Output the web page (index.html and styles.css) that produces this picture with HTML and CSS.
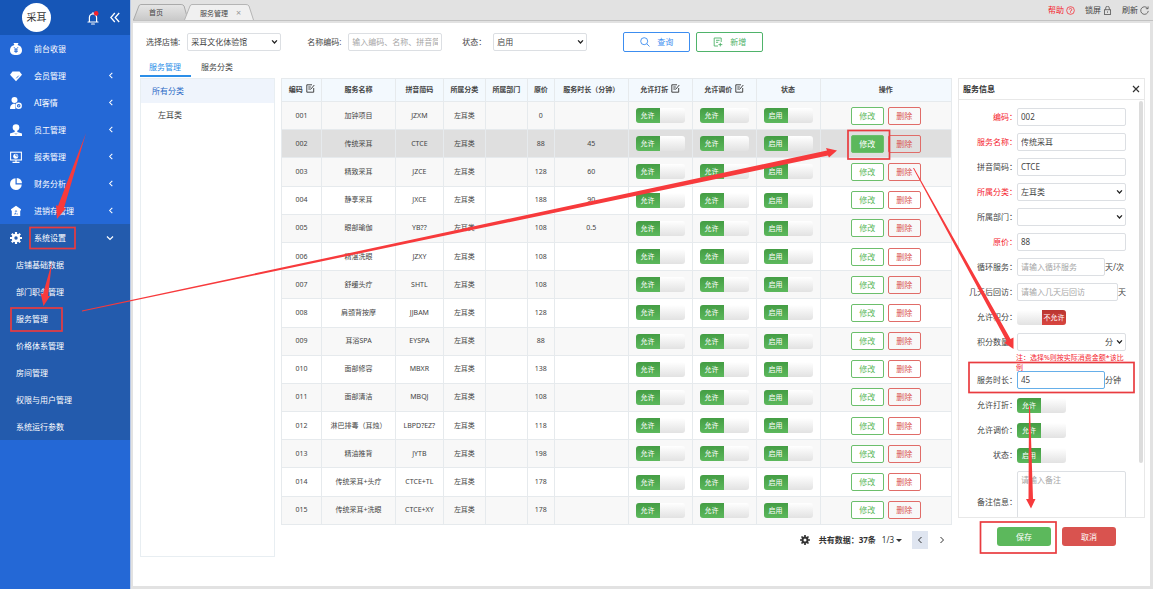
FILE: index.html
```html
<!DOCTYPE html>
<html lang="zh-CN">

<head>
    <meta charset="utf-8" />
    <title>服务管理</title>
    <link rel="stylesheet" href="styles.css">
</head>

<body>
    <aside class="sidebar">
        <div class="brand">
            <span class="logo">采耳</span>
            <svg class="bell" viewBox="0 0 12 14">
                <path d="M1 11h10M2.4 10.5V6.5a3.6 3.6 0 0 1 7.2 0v4M6 1.5v1.2M4.6 13h2.8" fill="none" stroke="#fff" stroke-width="1.2" stroke-linecap="round" />
                <circle cx="9.2" cy="2.4" r="2.3" fill="#f5222d" />
            </svg>
            <svg class="collapse" viewBox="0 0 10 10">
                <path d="M4.8 .5.8 5l4 4.500M9.200 .5l-4 4.500 4 4.500" fill="none" stroke="#fff" stroke-width="1.300" />
            </svg>
        </div>
        <nav>
            <a class="menu" href="#">
                <svg class="icon" viewBox="0 0 12 12"><path fill="#fff" d="M3.500 0h5L7.600 2C10.500 2.500 12 4.700 12 7.200 12 10.500 9.500 12 6 12S0 10.500 0 7.200C0 4.700 1.500 2.500 4.400 2z" /><path d="M4 4.200l2 2.300 2-2.300M6 6.500V10M4.200 6.900h3.600M4.200 8.400h3.600" fill="none" stroke="#2468d6" stroke-width=".9" /></svg>
                <span>前台收银</span>
            </a>
            <a class="menu" href="#">
                <svg class="icon" viewBox="0 0 12 12"><path fill="#fff" d="M2.500 1.500h7L12 4.800 6 11.200 0 4.800z" /><path d="M6.300 8.300 8.700 5.700" stroke="#2468d6" stroke-width=".9" /></svg>
                <span>会员管理</span>
                <svg class="arrow" viewBox="0 0 6 8"><path d="M4.500 1 1.500 4l3 3" /></svg>
            </a>
            <a class="menu" href="#">
                <svg class="icon" viewBox="0 0 12 12"><circle cx="4.500" cy="3" r="3" fill="#fff" /><path fill="#fff" d="M0 12c0-3 1.200-4.500 3.200-5.200h2.200V12z" /><circle cx="8.700" cy="8.700" r="2.500" fill="#2468d6" stroke="#fff" stroke-width="1.400" /><path d="M7.600 8.500h2.200L8.700 9.800z" fill="#fff" /></svg>
                <span>AI客情</span>
                <svg class="arrow" viewBox="0 0 6 8"><path d="M4.500 1 1.500 4l3 3" /></svg>
            </a>
            <a class="menu" href="#">
                <svg class="icon" viewBox="0 0 12 12"><circle cx="6" cy="3.600" r="3.300" fill="#fff" /><path fill="#fff" d="M4.700 6h2.600v2L12 9.600V12H0V9.600L4.700 8z" /><path d="M5 9.300l1 1 1-1" fill="none" stroke="#2468d6" stroke-width=".7" /></svg>
                <span>员工管理</span>
                <svg class="arrow" viewBox="0 0 6 8"><path d="M4.500 1 1.500 4l3 3" /></svg>
            </a>
            <a class="menu" href="#">
                <svg class="icon" viewBox="0 0 12 12"><rect x=".6" y="1.200" width="10.800" height="7.800" fill="none" stroke="#fff" stroke-width="1.100" /><path d="M2.500 11.300h7M6 9v2" stroke="#fff" stroke-width="1.200" /><circle cx="5.700" cy="5.200" r="2.500" fill="#fff" /><path d="M5.900 5V2.700M5.900 5h2.300" stroke="#2468d6" stroke-width=".8" /></svg>
                <span>报表管理</span>
                <svg class="arrow" viewBox="0 0 6 8"><path d="M4.500 1 1.500 4l3 3" /></svg>
            </a>
            <a class="menu" href="#">
                <svg class="icon" viewBox="0 0 12 12"><path fill="#fff" d="M5.500 .2v6.300h6.300A5.900 5.900 0 1 1 5.500 .2zM6.700 0A5.700 5.700 0 0 1 12 5.300H6.700z" /></svg>
                <span>财务分析</span>
                <svg class="arrow" viewBox="0 0 6 8"><path d="M4.500 1 1.500 4l3 3" /></svg>
            </a>
            <a class="menu" href="#">
                <svg class="icon" viewBox="0 0 12 12"><path fill="#fff" d="M6 .8 11 4.200v1.300h-.8V11H1.800V5.500H1V4.200z" /><path d="M4.200 9h1.400V7.600M7.800 9H6.500M5.200 6.800 6 5.500l.8 1.300" fill="none" stroke="#2468d6" stroke-width=".8" /></svg>
                <span>进销存管理</span>
                <svg class="arrow" viewBox="0 0 6 8"><path d="M4.500 1 1.500 4l3 3" /></svg>
            </a>
            <div class="opened">
                <a class="menu" href="#">
                    <svg class="icon" viewBox="0 0 12 12"><circle cx="6" cy="6" r="3" fill="none" stroke="#fff" stroke-width="2.600" /><path d="M6 0v2.500M6 9.500V12M0 6h2.500M9.500 6H12M1.800 1.800l1.700 1.700M8.500 8.500l1.700 1.700M1.800 10.200l1.700-1.700M8.500 3.500l1.700-1.700" stroke="#fff" stroke-width="2.200" /></svg>
                    <span>系统设置</span>
                    <svg class="arrow down" viewBox="0 0 8 6"><path d="M1 1.500l3 3 3-3" /></svg>
                </a>
                <a class="submenu" href="#">店铺基础数据</a>
                <a class="submenu" href="#">部门职务管理</a>
                <a class="submenu" href="#">服务管理</a>
                <a class="submenu" href="#">价格体系管理</a>
                <a class="submenu" href="#">房间管理</a>
                <a class="submenu" href="#">权限与用户管理</a>
                <a class="submenu" href="#">系统运行参数</a>
            </div>
        </nav>
    </aside>

    <div class="main">
        <header class="topbar">
            <div class="page-tabs">
                <button class="page-tab">
                    <svg viewBox="0 0 56 16" preserveAspectRatio="none"><defs><linearGradient id="tabGrey" x2="0" y2="1"><stop offset="0" stop-color="#e6e6e6" /><stop offset="1" stop-color="#c9c9c9" /></linearGradient></defs><path d="M.5 16 6 2Q6.600 .5 8 .5H49Q51 .5 52 2L56 16" fill="url(#tabGrey)" stroke="#a9a9a9" /></svg>
                    <span>首页</span>
                </button>
                <button class="page-tab current">
                    <svg viewBox="0 0 70 16" preserveAspectRatio="none"><path d="M.5 16 6 2Q6.600 .5 8 .5H62Q64 .5 65 2L69.500 16" fill="#f0f0f0" stroke="#b5b5b5" /></svg>
                    <span>服务管理</span><i>×</i>
                </button>
            </div>
            <div class="tools">
                <a class="help" href="#">帮助
                    <svg viewBox="0 0 10 10"><circle cx="5" cy="5" r="4.300" /><path d="M3.600 4a1.400 1.400 0 1 1 1.400 1.500v.8M5 7v.8" /></svg>
                </a>
                <a href="#">锁屏
                    <svg viewBox="0 0 10 10"><rect x="1.500" y="4.200" width="7" height="5.200" /><path d="M3 4V2.300a2 2 0 0 1 4 0V4M5 6v1.500" /></svg>
                </a>
                <a href="#">刷新
                    <svg viewBox="0 0 10 10"><path d="M8.500 2.700A4.200 4.200 0 1 0 9.200 5.500M9 .5v2.500H6.500" /></svg>
                </a>
            </div>
        </header>

        <div class="page">
            <form class="filters">
                <label for="shop">选择店铺:</label>
                <select id="shop"><option>采耳文化体验馆</option></select>
                <label for="keyword">名称编码:</label>
                <input id="keyword" type="text" placeholder="输入编码、名称、拼音简码">
                <label for="state">状态：</label>
                <select id="state"><option>启用</option></select>
                <button type="button" class="search">
                    <svg viewBox="0 0 10 10"><circle cx="4.200" cy="4.200" r="3.500" /><path d="M6.800 6.800 9.500 9.500" /></svg>查询
                </button>
                <button type="button" class="add">
                    <svg viewBox="0 0 10 10"><path d="M5 9H1.200V1h7v4M3 3.300h3.600M3 5.300h2.200M7.300 5.800v3.600M5.500 7.600h3.800" /></svg>新增
                </button>
            </form>

            <div class="content">
                <div class="left">
                    <div class="tabs">
                        <a class="active" href="#">服务管理</a>
                        <a href="#">服务分类</a>
                    </div>
                    <div class="tree">
                        <a class="active" href="#">所有分类</a>
                        <a class="child" href="#">左耳类</a>
                    </div>
                </div>

                <div class="list">
                    <table>
                        <colgroup>
                            <col class="c-code"><col class="c-name"><col class="c-pinyin"><col class="c-type"><col class="c-type"><col class="c-price"><col class="c-name"><col class="c-switch"><col class="c-switch"><col class="c-switch"><col>
                        </colgroup>
                        <thead>
                            <tr>
                                <th>编码 <svg class="edit" viewBox="0 0 9 9"><path d="M6 .8H.8v7.400h6.900V4M2.300 3h2.500M2.300 5h2M4.500 5.500 8.300 1" /></svg></th>
                                <th>服务名称</th>
                                <th>拼音简码</th>
                                <th>所属分类</th>
                                <th>所属部门</th>
                                <th>原价</th>
                                <th>服务时长（分钟）</th>
                                <th>允许打折 <svg class="edit" viewBox="0 0 9 9"><path d="M6 .8H.8v7.400h6.900V4M2.300 3h2.500M2.300 5h2M4.500 5.500 8.300 1" /></svg></th>
                                <th>允许调价 <svg class="edit" viewBox="0 0 9 9"><path d="M6 .8H.8v7.400h6.900V4M2.300 3h2.500M2.300 5h2M4.500 5.500 8.300 1" /></svg></th>
                                <th>状态</th>
                                <th>操作</th>
                            </tr>
                        </thead>
                        <tbody id="rows"></tbody>
                    </table>
                    <div class="pager">
                        <svg class="gear" viewBox="0 0 12 12"><circle cx="6" cy="6" r="3" fill="none" stroke="#333" stroke-width="2.400" /><path d="M6 0v2.500M6 9.500V12M0 6h2.500M9.500 6H12M1.800 1.800l1.700 1.700M8.500 8.500l1.700 1.700M1.800 10.200l1.700-1.700M8.500 3.500l1.700-1.700" stroke="#333" stroke-width="2" /></svg>
                        <b>共有数据：37条</b>
                        <span class="pages">1/3</span><i class="caret"></i>
                        <button class="prev"><svg viewBox="0 0 6 8"><path d="M4.500 1 1.500 4l3 3" /></svg></button>
                        <button><svg viewBox="0 0 6 8"><path d="M1.500 1l3 3-3 3" /></svg></button>
                    </div>
                </div>

                <form class="detail">
                    <div class="box">
                        <div class="box-title">
                            <b>服务信息</b>
                            <svg viewBox="0 0 8 8"><path d="M1 1l6 6M7 1 1 7" /></svg>
                        </div>
                        <div class="fields">
                            <div class="field required"><label for="code">编码：</label><input id="code" type="text" value="002"></div>
                            <div class="field required"><label for="name">服务名称：</label><input id="name" type="text" value="传统采耳"></div>
                            <div class="field"><label for="pinyin">拼音简码：</label><input id="pinyin" type="text" value="CTCE"></div>
                            <div class="field required"><label for="type">所属分类：</label><select id="type"><option>左耳类</option></select></div>
                            <div class="field"><label for="dept">所属部门：</label><select id="dept"><option></option></select></div>
                            <div class="field required"><label for="price">原价：</label><input id="price" type="text" value="88"></div>
                            <div class="field"><label for="cycle">循环服务：</label><input id="cycle" type="text" placeholder="请输入循环服务"><span class="suffix">天/次</span></div>
                            <div class="field"><label for="visit">几天后回访：</label><input id="visit" type="text" placeholder="请输入几天后回访"><span>天</span></div>
                            <div class="field"><label for="points">允许积分：</label><span class="switch off"><input id="points" type="checkbox"><em>不允许</em></span></div>
                            <div class="field with-note"><label for="amount">积分数量：</label><select id="amount" class="unit"><option>分</option></select></div>
                            <p class="note">注：选择%则按实际消费金额*该比例</p>
                            <div class="field"><label for="minutes">服务时长：</label><input id="minutes" class="focused" type="text" value="45"><span class="suffix">分钟</span></div>
                            <div class="field"><label for="discount">允许打折：</label><span class="switch"><input id="discount" type="checkbox" checked><em>允许</em></span></div>
                            <div class="field"><label for="adjust">允许调价：</label><span class="switch"><input id="adjust" type="checkbox" checked><em>允许</em></span></div>
                            <div class="field"><label for="enabled">状态：</label><span class="switch"><input id="enabled" type="checkbox" checked><em>启用</em></span></div>
                            <div class="field"><label for="remark">备注信息：</label><textarea id="remark" placeholder="请输入备注"></textarea></div>
                        </div>
                        <div class="scrollbar"></div>
                    </div>
                    <div class="actions">
                        <button type="button" class="save">保存</button>
                        <button type="button" class="cancel">取消</button>
                    </div>
                </form>
            </div>
        </div>
    </div>

    <!-- step marks over the page -->
    <svg class="marks" viewBox="0 0 1153 589" width="1153" height="589">
        <g fill="none" stroke="#e93b3f" stroke-width="1.700">
            <rect x="30" y="227.500" width="45" height="21" />
            <rect x="11" y="308" width="51" height="23" />
            <rect x="848" y="130.500" width="41.500" height="28.500" />
            <rect x="969" y="362.500" width="165" height="30" />
            <rect x="980.500" y="522" width="75.500" height="31" />
        </g>
        <g fill="#f73a3c">
            <polygon points="86,133 64,208 66,208 57,219 56,205 58,206" />
            <polygon points="52,262 48,296 50,296 43.500,306 40.500,293 43,294" />
            <polygon points="82,310.500 827,150.500 826,148 837,150.500 829,157.500 828,155.500 82,311.500" />
            <polygon points="913,168 914,168 1010.500,339 1013.500,337.500 1013.500,349 1004.500,343 1006.500,341" />
            <polygon points="1029,406 1030,406 1033,499 1035.500,499 1031,508.500 1026,499 1028.500,499" />
        </g>
    </svg>

    <script src="script.js"></script>
</body>

</html>
```
FILE: styles.css
```css
* {
    box-sizing: border-box;
}

body {
    display: flex;
    height: 100vh;
    margin: 0;
    overflow: hidden;
    background-color: #e2e2e2;
    color: #444;
    font-family: "Noto Sans", "Noto Sans CJK SC", sans-serif;
    font-size: 8px;
    line-height: 12px;
}

a {
    color: inherit;
    text-decoration: none;
}

button,
input,
select,
textarea {
    margin: 0;
    padding: 0;
    font: inherit;
    color: inherit;
}

i,
em {
    font-style: normal;
}

svg {
    flex: none;
}

/* sidebar */
.sidebar {
    flex: none;
    width: 131px;
    background-color: #2468d6;
    border-right: 1px solid #b9c9e6;
    color: #fff;
}

.brand {
    display: flex;
    align-items: center;
    height: 35px;
    padding: 0 10px 0 22px;
    background-color: #1656b7;
}

.logo {
    width: 29px;
    height: 29px;
    margin-right: auto;
    border-radius: 50%;
    background-color: #fff;
    color: #333;
    font-size: 10px;
    line-height: 28px;
    text-align: center;
}

.bell {
    width: 12px;
    height: 14px;
    margin-right: 11px;
}

.collapse {
    width: 10px;
    height: 11px;
}

.menu {
    display: flex;
    align-items: center;
    height: 27px;
    padding: 0 16px 0 10px;
}

.menu .icon {
    width: 12px;
    height: 12px;
    margin-right: 12px;
}

.menu .arrow {
    width: 6px;
    height: 7px;
    margin-left: auto;
}

.menu .arrow.down {
    width: 8px;
    height: 6px;
}

.arrow path {
    fill: none;
    stroke: #fff;
    stroke-width: 1.2;
}

.opened {
    background-color: #235bad;
}

.submenu {
    display: block;
    height: 27px;
    padding-left: 16px;
    line-height: 27px;
}

/* top bar */
.main {
    flex: 1;
    min-width: 0;
    display: flex;
    flex-direction: column;
    padding: 0 3px 3px 2px;
}

.topbar {
    display: flex;
    justify-content: space-between;
    align-items: flex-end;
    height: 21px;
    margin-right: -3px;
    border-bottom: 1px solid #c2c2c2;
}

.page-tabs {
    display: flex;
}

.page-tab {
    position: relative;
    width: 55px;
    height: 16px;
    border: 0;
    background: none;
    font-size: 7px;
    line-height: 17px;
    text-align: left;
    padding-left: 16px;
}

.page-tab.current {
    width: 70px;
    margin-left: -4px;
}

.page-tab svg {
    position: absolute;
    left: 0;
    top: 0;
    width: 100%;
    height: 100%;
}

.page-tab span {
    position: relative;
}

.page-tab i {
    position: relative;
    margin-left: 8px;
    color: #999;
    font-size: 9px;
}

.tools {
    display: flex;
    gap: 10px;
    height: 20px;
    padding-right: 4px;
}

.tools a {
    display: flex;
    align-items: center;
    gap: 2px;
}

.tools svg {
    width: 9px;
    height: 9px;
    fill: none;
    stroke: currentColor;
    stroke-width: 0.8;
}

.tools .help {
    color: #f5222d;
}

.page {
    flex: 1;
    min-height: 0;
    display: flex;
    flex-direction: column;
    margin-top: 2px;
    padding: 9px 5px 29px 7px;
    background-color: #fff;
}

/* inputs */
input[type=text],
select,
textarea {
    height: 18px;
    padding: 0 3px 1px;
    border: 1px solid #dcdfe3;
    border-radius: 2px;
    background-color: #fff;
    outline: none;
}

select {
    appearance: none;
    background: #fff url("data:image/svg+xml,%3Csvg xmlns='http://www.w3.org/2000/svg' viewBox='0 0 8 6'%3E%3Cpath d='M1.200 1.200 4 4.200l2.800-3' fill='none' stroke='%23222' stroke-width='1.500'/%3E%3C/svg%3E") no-repeat right 2px center;
    background-size: 7px 6px;
}

::placeholder {
    color: #a6a6a6;
    opacity: 1;
}

/* filters */
.filters {
    display: flex;
    align-items: center;
    height: 20px;
    padding-left: 6px;
}

.filters label {
    flex: none;
    margin-right: 7px;
}

.filters input[type=text],
.filters select {
    flex: none;
    width: 94px;
    margin-right: 26px;
}

.filters input[type=text] {
    margin-right: 20px;
}

.filters #state {
    margin-right: 36px;
}

.filters button {
    display: flex;
    justify-content: center;
    align-items: center;
    gap: 7px;
    width: 67px;
    height: 20px;
    margin-right: 6px;
    border: 1px solid;
    border-radius: 2px;
    background-color: #fff;
}

.filters button svg {
    width: 10px;
    height: 10px;
    fill: none;
    stroke: currentColor;
    stroke-width: 0.9;
}

.search {
    color: #3c8df0;
}

.add {
    color: #4fb36a;
}

.content {
    flex: 1;
    min-height: 0;
    display: flex;
    gap: 6px;
}

/* category tree */
.left {
    flex: none;
    display: flex;
    flex-direction: column;
    width: 135px;
}

.tabs {
    display: flex;
    height: 26px;
    padding-top: 7px;
}

.tabs a {
    width: 51px;
    height: 18px;
    line-height: 16px;
    padding-left: 9px;
}

.tabs .active {
    border-bottom: 2px solid #2b8ee8;
    color: #2b8ee8;
}

.tabs a + a {
    padding-left: 10px;
}

.tree {
    flex: 1;
    border: 1px solid #e8eef2;
}

.tree a {
    display: block;
    height: 24px;
    padding-left: 11px;
    line-height: 23px;
}

.tree .active {
    background-color: #eff4fc;
    color: #2c6ac6;
}

.tree .child {
    padding-left: 17px;
}

/* service list */
.list {
    flex: 1;
    min-width: 0;
    padding-top: 26px;
}

table {
    width: 100%;
    height: calc(100vh - 142px);
    border-collapse: collapse;
    table-layout: fixed;
    font-size: 7px;
    text-align: center;
}

.c-code {
    width: 6%;
}

.c-name {
    width: 11%;
}

.c-pinyin {
    width: 48px;
}

.c-type {
    width: 42px;
}

.c-price {
    width: 27px;
}

.c-switch {
    width: 64px;
}

th,
td {
    padding: 0;
    border: 1px solid #e6eaed;
    white-space: nowrap;
    overflow: hidden;
}

th {
    height: 23px;
    background-color: #f3f9fe;
}

tbody tr:nth-child(odd) {
    background-color: #f8f8f8;
}

tbody tr.selected {
    background-color: #dfdfdf;
}

.edit {
    width: 9px;
    height: 9px;
    margin-left: 1px;
    vertical-align: -1px;
    fill: none;
    stroke: #333;
    stroke-width: 0.9;
}

td button {
    width: 33px;
    height: 18px;
    border: 1px solid #6cbf6c;
    border-radius: 2px;
    background-color: #fff;
    color: #5cb85c;
    font-size: 8px;
    line-height: 12px;
    vertical-align: middle;
}

td button.del {
    margin-left: 4px;
    border-color: #e06c68;
    background-color: transparent;
    color: #d9534f;
}

.selected .mod {
    background-color: #5cb85c;
    color: #fff;
}

/* switches */
.switch {
    position: relative;
    display: inline-block;
    width: 49px;
    height: 15px;
    border-radius: 3px;
    background-image: linear-gradient(#fff, #e2e2e2);
    font-size: 7px;
    vertical-align: middle;
    overflow: hidden;
}

.switch input {
    position: absolute;
    inset: 0;
    width: 100%;
    height: 100%;
    opacity: 0;
}

.switch em {
    display: block;
    width: 24px;
    height: 15px;
    background-image: linear-gradient(#449d44, #5cb85c);
    color: #fff;
    line-height: 15px;
    text-align: center;
}

.switch.off em {
    margin-left: auto;
    background-image: linear-gradient(#b93531, #d9453f);
}

/* pager */
.pager {
    display: flex;
    justify-content: flex-end;
    align-items: center;
    padding: 6px 2px 0 0;
    height: 24px;
    color: #333;
}

.gear {
    width: 10px;
    height: 10px;
    margin-right: 9px;
}

.pages {
    margin-left: 6px;
}

.caret {
    margin: 0 10px 0 2px;
    border: 3px solid transparent;
    border-top-color: #333;
    border-bottom: 0;
}

.pager button {
    display: flex;
    justify-content: center;
    align-items: center;
    width: 16px;
    height: 18px;
    border: 0;
    background: none;
}

.pager .prev {
    margin-right: 6px;
    background-color: #dfe5f0;
}

.pager button svg {
    width: 6px;
    height: 8px;
    fill: none;
    stroke: #333;
}

/* detail form */
.detail {
    flex: none;
    display: flex;
    flex-direction: column;
    width: 187px;
    padding-top: 26px;
}

.box {
    position: relative;
    flex: 1;
    min-height: 0;
    display: flex;
    flex-direction: column;
    border: 1px solid #e8e8e8;
}

.box-title {
    display: flex;
    justify-content: space-between;
    align-items: center;
    height: 21px;
    padding: 0 4px;
    border-bottom: 1px solid #e8e8e8;
    color: #333;
}

.box-title svg {
    width: 8px;
    height: 8px;
    fill: none;
    stroke: #333;
    stroke-width: 1.2;
}

.fields {
    flex: 1;
    min-height: 0;
    overflow: hidden;
    padding: 8px 18px 0 0;
}

.field {
    display: flex;
    align-items: center;
    min-height: 18px;
    margin-bottom: 7px;
}

.field label {
    flex: none;
    width: 58px;
    text-align: right;
    white-space: nowrap;
}

.field input[type=text],
.field select,
.field textarea {
    flex: 1;
    min-width: 0;
}

.field > span:last-child {
    flex: none;
}

.suffix {
    width: 21px;
}

.required label {
    color: #f5222d;
}

.field .unit {
    padding-right: 12px;
    text-align-last: right;
}

.with-note {
    margin-bottom: 2px;
}

.note {
    height: 18px;
    margin: 0 0 0 57px;
    color: #f5222d;
    font-size: 7px;
    line-height: 10px;
}

.field .focused {
    border-color: #66afe9;
}

.field textarea {
    height: 62px;
    padding: 2px 3px;
    resize: none;
}

.scrollbar {
    position: absolute;
    top: 22px;
    right: 1px;
    width: 4px;
    height: 362px;
    border-radius: 2px;
    background-color: #dcdcdc;
}

.actions {
    display: flex;
    justify-content: flex-end;
    gap: 11px;
    height: 39px;
    padding: 9px 29px 11px 0;
}

.actions button {
    width: 54px;
    border: 0;
    border-radius: 3px;
    color: #fff;
}

.save {
    background-color: #5cb85c;
}

.cancel {
    background-color: #d9534f;
}

.marks {
    position: absolute;
    left: 0;
    top: 0;
    pointer-events: none;
}
```
FILE: script.js
```js
// code, name, pinyin, price, minutes
const services = [
    ['001', '加钟项目', 'JZXM', '0', ''],
    ['002', '传统采耳', 'CTCE', '88', '45'],
    ['003', '精致采耳', 'JZCE', '128', '60'],
    ['004', '静享采耳', 'JXCE', '188', '90'],
    ['005', '眼部瑜伽', 'YB??', '108', '0.5'],
    ['006', '精湛洗眼', 'JZXY', '108', ''],
    ['007', '舒缓头疗', 'SHTL', '108', ''],
    ['008', '肩颈背按摩', 'JJBAM', '128', ''],
    ['009', '耳浴SPA', 'EYSPA', '88', ''],
    ['010', '面部修容', 'MBXR', '138', ''],
    ['011', '面部清洁', 'MBQJ', '108', ''],
    ['012', '淋巴排毒（耳烛）', 'LBPD?EZ?', '118', ''],
    ['013', '精油推背', 'JYTB', '198', ''],
    ['014', '传统采耳+头疗', 'CTCE+TL', '178', ''],
    ['015', '传统采耳+洗眼', 'CTCE+XY', '178', '']
];

function switchCell(text) {
    return '<td><label class="switch"><input type="checkbox" checked><em>' + text + '</em></label></td>';
}

let html = '';
for (let i = 0; i < services.length; i++) {
    const s = services[i];
    html += '<tr' + (s[0] === '002' ? ' class="selected"' : '') + '>' +
        '<td>' + s[0] + '</td><td>' + s[1] + '</td><td>' + s[2] + '</td>' +
        '<td>左耳类</td><td></td><td>' + s[3] + '</td><td>' + s[4] + '</td>' +
        switchCell('允许') + switchCell('允许') + switchCell('启用') +
        '<td><button class="mod">修改</button><button class="del">删除</button></td></tr>';
}
document.getElementById('rows').innerHTML = html;
```
